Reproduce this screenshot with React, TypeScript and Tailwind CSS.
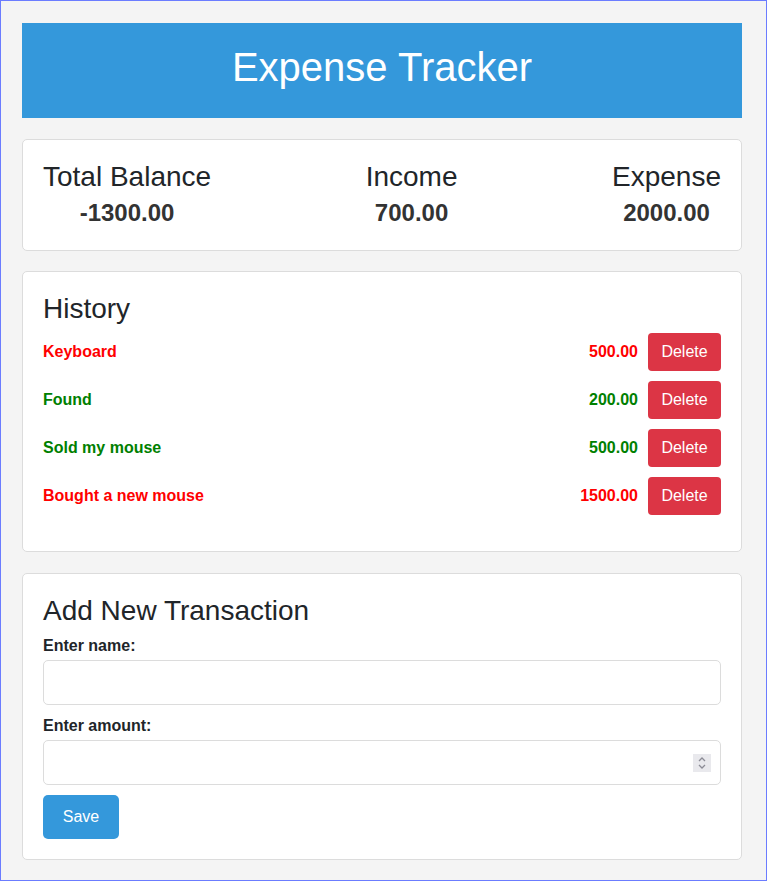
import React, { useState } from 'react';

type Tx = { id: number; name: string; amount: number; type: 'income' | 'expense' };

const initial: Tx[] = [
  { id: 1, name: 'Keyboard', amount: 500, type: 'expense' },
  { id: 2, name: 'Found', amount: 200, type: 'income' },
  { id: 3, name: 'Sold my mouse', amount: 500, type: 'income' },
  { id: 4, name: 'Bought a new mouse', amount: 1500, type: 'expense' },
];

const Spinner: React.FC = () => (
  <div className="pointer-events-none absolute right-[10px] top-1/2 -translate-y-1/2 w-[18px] h-[18px] bg-[#e9e9ed] flex items-center justify-center">
    <svg width="10" height="14" viewBox="0 0 10 14" fill="none" stroke="#8c8c96" strokeWidth="1.3">
      <path d="M2 5 L5 2 L8 5" />
      <path d="M2 9 L5 12 L8 9" />
    </svg>
  </div>
);

export default function App() {
  const [items, setItems] = useState<Tx[]>(initial);
  const [name, setName] = useState('');
  const [amount, setAmount] = useState('');

  const income = items.filter((t) => t.type === 'income').reduce((s, t) => s + t.amount, 0);
  const expense = items.filter((t) => t.type === 'expense').reduce((s, t) => s + t.amount, 0);

  return (
    <div className="min-h-[881px] border border-[#6b7cff] bg-[#f4f4f4] pl-[21px] pt-[22px] pb-[20px] font-['Liberation_Sans',Arial,sans-serif] text-[#212529]">
      <div className="w-[720px] flex flex-col gap-[21px]">
        <header className="bg-[#3498db] pt-[20px] pb-[27px] text-center">
          <h1 className="text-[40px] leading-[48px] text-white">Expense Tracker</h1>
        </header>

        <section className="bg-white border border-[#dcdcdc] rounded-[5px] px-[20px] pt-[20px] pb-[23px] flex justify-between">
          {[
            ['Total Balance', (income - expense).toFixed(2)],
            ['Income', income.toFixed(2)],
            ['Expense', expense.toFixed(2)],
          ].map(([label, value]) => (
            <div key={label} className="text-center">
              <h2 className="text-[28px] leading-[34px] mb-[4px]">{label}</h2>
              <p className="text-[24px] leading-[29px] font-bold text-[#333]">{value}</p>
            </div>
          ))}
        </section>

        <section className="bg-white border border-[#dcdcdc] rounded-[5px] px-[20px] pt-[20px] pb-[16px] -mt-[1px]">
          <h2 className="text-[28px] leading-[34px] mb-[7px]">History</h2>
          <ul className="flex flex-col gap-[10px] mb-[20px]">
            {items.map((t) => (
              <li key={t.id} className="flex items-center justify-between h-[38px]">
                <span
                  className={`text-[16px] font-bold ${t.type === 'income' ? 'text-[#008000]' : 'text-[#ff0000]'}`}
                >
                  {t.name}
                </span>
                <div className="flex items-center gap-[10px]">
                  <span
                    className={`text-[16px] font-bold ${t.type === 'income' ? 'text-[#008000]' : 'text-[#ff0000]'}`}
                  >
                    {t.amount.toFixed(2)}
                  </span>
                  <button
                    onClick={() => setItems(items.filter((x) => x.id !== t.id))}
                    className="h-[38px] w-[73px] rounded-[4px] bg-[#dc3545] text-white text-[16px]"
                  >
                    Delete
                  </button>
                </div>
              </li>
            ))}
          </ul>
        </section>

        <section className="bg-white border border-[#dcdcdc] rounded-[5px] px-[20px] pt-[20px] pb-[20px]">
          <h2 className="text-[28px] leading-[34px] mb-[9px]">Add New Transaction</h2>
          <form
            onSubmit={(e) => {
              e.preventDefault();
              const n = parseFloat(amount);
              if (!name || isNaN(n)) return;
              setItems([...items, { id: Date.now(), name, amount: Math.abs(n), type: n < 0 ? 'expense' : 'income' }]);
              setName('');
              setAmount('');
            }}
          >
            <label className="block text-[16px] leading-[18px] font-bold mb-[5px]">Enter name:</label>
            <input
              value={name}
              onChange={(e) => setName(e.target.value)}
              className="block w-full h-[45px] border border-[#dcdcdc] rounded-[5px] px-[10px] text-[16px] outline-none mb-[12px]"
            />
            <label className="block text-[16px] leading-[18px] font-bold mb-[5px]">Enter amount:</label>
            <div className="relative mb-[10px]">
              <input
                inputMode="numeric"
                value={amount}
                onChange={(e) => setAmount(e.target.value)}
                className="block w-full h-[45px] border border-[#dcdcdc] rounded-[5px] px-[10px] text-[16px] outline-none"
              />
              <Spinner />
            </div>
            <button type="submit" className="h-[44px] w-[76px] rounded-[5px] bg-[#3498db] text-white text-[16px]">
              Save
            </button>
          </form>
        </section>
      </div>
    </div>
  );
}
